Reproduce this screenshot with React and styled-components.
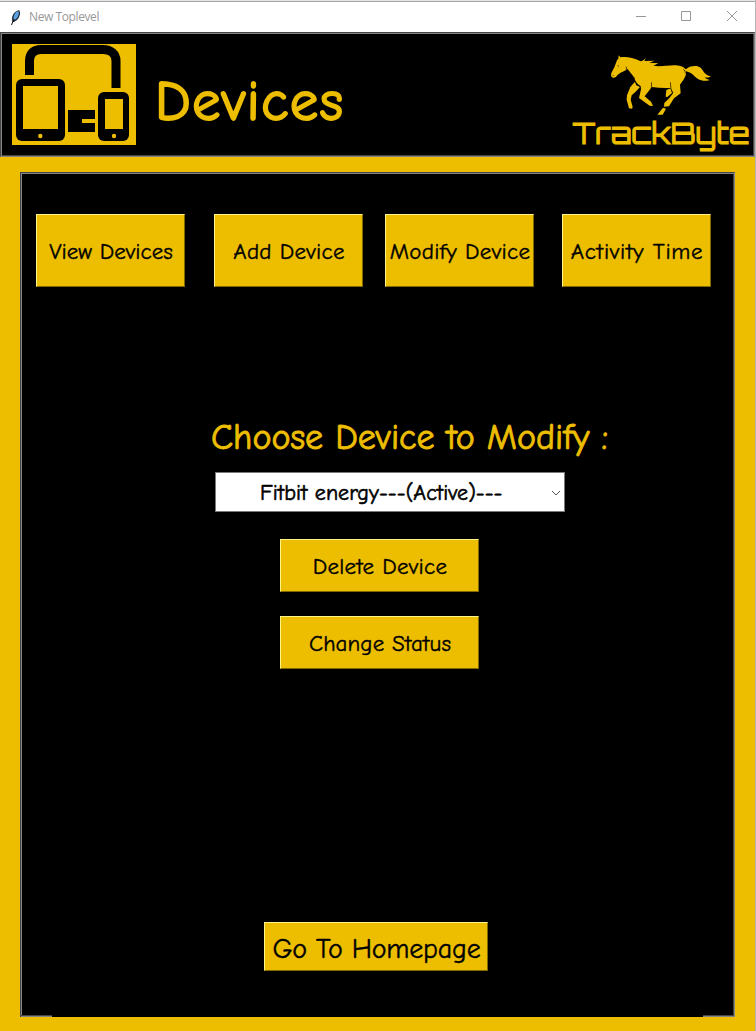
import React from "react";
import styled, { createGlobalStyle } from "styled-components";

const gold = "#edbd00";

const GlobalStyle = createGlobalStyle`
  * { box-sizing: border-box; }
  body { margin: 0; background: ${gold}; }
`;

const Window = styled.div`
  width: 756px;
  height: 1031px;
  display: flex;
  flex-direction: column;
  background: ${gold};
  border-right: 1px solid #b4b4b4;
  overflow: hidden;
  font-family: "Comic Sans MS", "Comic Neue", "Open Sans", sans-serif;
`;

const TitleBar = styled.header`
  height: 32px;
  flex: none;
  display: flex;
  align-items: center;
  background: #fff;
  border-top: 1px solid #e4e4e4;
  box-shadow: inset 0 1px 0 #a6a6a6;
  padding: 1px 0 0 9px;
`;

const Caption = styled.span`
  flex: 1;
  margin-left: 7px;
  font: 12px/16px "Segoe UI", "Open Sans", sans-serif;
  letter-spacing: -0.4px;
  color: #999;
`;

const Controls = styled.svg`
  width: 130px;
  height: 28px;
  flex: none;
`;

const Header = styled.section`
  height: 125px;
  flex: none;
  display: flex;
  align-items: flex-start;
  background: #000;
  border: 1px solid #464646;
  border-bottom-color: #858585;
  border-right-color: #858585;
  box-shadow: inset 1px 1px 0 #858585, inset -1px -1px 0 #464646;
  padding: 11px 0 0 11px;
`;

const Title = styled.h1`
  flex: 1;
  margin: 19px 0 0 19px;
  font-size: 57px;
  line-height: 78px;
  font-weight: 400;
  letter-spacing: 1.2px;
  -webkit-text-stroke: 1.8px ${gold};
  color: ${gold};
`;

const Logo = styled.svg`
  width: 186px;
  height: 111px;
  flex: none;
`;

const Panel = styled.main`
  width: 715px;
  height: 845px;
  margin: 15px 0 0 20px;
  display: flex;
  flex-direction: column;
  align-items: flex-start;
  background: #000;
  border: 1px solid #464646;
  border-right-color: #858585;
  border-bottom: none;
  box-shadow: inset 1px 1px 0 #858585, inset -1px 0 0 #464646;
`;

const Nav = styled.nav`
  display: grid;
  grid-template-columns: 178px 171px 177px 149px;
  margin: 41px 0 0 15px;
`;

const Button = styled.button`
  width: ${(p) => p.$width}px;
  height: ${(p) => p.$height}px;
  flex: none;
  padding: ${(p) => p.$drop || 2}px 0 0 1px;
  display: flex;
  align-items: center;
  justify-content: center;
  white-space: nowrap;
  font-family: inherit;
  font-size: ${(p) => p.$size || 23}px;
  letter-spacing: ${(p) => p.$spacing || 0}px;
  -webkit-text-stroke: 0.4px #000;
  color: #000;
  background: ${gold};
  border: 1px solid;
  border-color: #fff58a #826800 #826800 #fff58a;
  border-radius: 0;
`;

const Form = styled.section`
  display: flex;
  flex-direction: column;
  align-items: flex-start;
  margin: 124px 0 0 190px;
`;

const Prompt = styled.label`
  height: 52px;
  font-size: 36px;
  line-height: 53px;
  white-space: nowrap;
  -webkit-text-stroke: 0.9px ${gold};
  color: ${gold};
`;

const Combo = styled.div`
  width: 350px;
  height: 40px;
  margin: 9px 0 27px 4px;
  display: flex;
  align-items: center;
  justify-content: space-between;
  padding: 1px 3px 0 44px;
  background: #fff;
  border: 1px solid #7a7a7a;
  font-size: 22px;
  letter-spacing: 0.06px;
  white-space: nowrap;
  -webkit-text-stroke: 0.6px #000;
  color: #000;
`;

const Actions = styled.div`
  display: flex;
  flex-direction: column;
  gap: 24px;
  margin-left: 69px;
`;

const Home = styled.div`
  margin: 253px 0 0 243px;
`;

const PanelFoot = styled.div`
  width: 713px;
  margin-top: auto;
  display: flex;
  justify-content: space-between;
`;

const FootEdge = styled.i`
  width: 31px;
  height: 2px;
  background: linear-gradient(#464646 50%, #858585 50%);
`;

function Feather() {
  return (
    <svg width="13" height="17" viewBox="0 0 13 17">
      <path d="M3.500 13C2 8 4 3 10 1c2 2 1 7-2 10l-3 2z" fill="#202c38" />
      <path d="M4.500 10C4.500 6 6 3 9.500 2c1 2 0 6-2.500 8l-2 1z" fill="#5ba2e4" />
      <path d="M2.500 16L5 10" stroke="#111" strokeWidth="1" />
    </svg>
  );
}

function DevicesIcon() {
  return (
    <svg width="124" height="101" viewBox="0 0 124 101">
      <path d="M0 0h124v101H0z" fill={gold} />
      <path d="M17.500 31V17C17.500 9 22 5.500 29 5.500H91C99 5.500 104 10 104 17V44" fill="none" stroke="#000" strokeWidth="9" />
      <rect x="4" y="35" width="49" height="62" rx="6" />
      <path d="M11 42h35v43H11z" fill={gold} />
      <circle cx="28.300" cy="92" r="2.200" fill={gold} />
      <path d="M56 66h27v9H70v4h13v9H56z" />
      <rect x="86" y="48" width="31" height="49" rx="6" />
      <path d="M93 55h18v30H93z" fill={gold} />
      <circle cx="102" cy="92" r="2.200" fill={gold} />
    </svg>
  );
}

function TrackByteLogo() {
  return (
    <Logo viewBox="568 44 186 111">
      <g transform="translate(600 45) scale(.33333)">
        <g fill={gold}>
          <path d="M33 93L34 84L43 67L51 46L55 41L56 31L61 37C76 34 96 37 108 43L122 49C131 47 134 42 138 38L133 48L164 47L148 53L175 55L160 62C180 66 205 60 228 61C242 62 252 67 257 73C268 63 288 60 300 67C310 74 311 91 333 94C327 99 319 98 314 97C317 102 324 104 329 105C316 110 303 107 294 102C282 96 279 83 258 79C260 93 250 106 240 119L242 145L222 160L207 184L192 185L193 174L209 158L219 145L212 129C194 130 174 129 155 126L147 137L134 154L153 170L159 183L149 182L117 159L123 133L122 124C107 115 104 103 100 94C94 87 89 80 83 72C72 80 58 81 48 96L39 99Z" />
          <path d="M105 110L109 121L120 126L107 140L95 151L92 164L98 186L96 191L87 190L80 164L81 151L91 126Z" />
          <path d="M199 135L212 130L216 144L202 156L197 155Z" />
          <path d="M189 188L198 191L188 209L172 209Z" />
        </g>
        <g fill="none" stroke="#000" strokeWidth="2">
          <path d="M79 65Q77 76 84 80M102 96Q104 119 121 124M155 112L154 127M211 112L213 133L219 144M53 62L57 64M38 92L41 91M250 73Q257 76 256 85" />
        </g>
      </g>
      <text x="572.500" y="143.500" textLength="177" lengthAdjust="spacingAndGlyphs" fill={gold} stroke={gold} strokeWidth="1" fontFamily="Orbitron, Inter, sans-serif" fontSize="28.500" fontWeight="400">TrackByte</text>
    </Logo>
  );
}

export default function App() {
  return (
    <Window>
      <GlobalStyle />
      <TitleBar>
        <Feather />
        <Caption>New Toplevel</Caption>
        <Controls viewBox="0 0 130 28" fill="none" stroke="#999">
          <path d="M11 13.500h10M56.500 8.500h9v9h-9zM102 8l10 10M112 8L102 18" />
        </Controls>
      </TitleBar>
      <Header>
        <DevicesIcon />
        <Title>Devices</Title>
        <TrackByteLogo />
      </Header>
      <Panel>
        <Nav>
          <Button $width={149} $height={73}>View Devices</Button>
          <Button $width={149} $height={73} $spacing={0.25}>Add Device</Button>
          <Button $width={149} $height={73} $spacing={0.3}>Modify Device</Button>
          <Button $width={149} $height={73} $spacing={0.7}>Activity Time</Button>
        </Nav>
        <Form>
          <Prompt>Choose Device to Modify :</Prompt>
          <Combo>
            <span>Fitbit energy---(Active)---</span>
            <svg width="10" height="10" viewBox="0 0 10 10" fill="none" stroke="#555">
              <path d="M1 3l4 4 4-4" />
            </svg>
          </Combo>
          <Actions>
            <Button $width={199} $height={53} $spacing={0.25}>Delete Device</Button>
            <Button $width={199} $height={53} $spacing={0.1}>Change Status</Button>
          </Actions>
        </Form>
        <Home>
          <Button $width={224} $height={49} $size={28} $spacing={-0.2} $drop={4}>Go To Homepage</Button>
        </Home>
        <PanelFoot>
          <FootEdge />
          <FootEdge />
        </PanelFoot>
      </Panel>
    </Window>
  );
}
